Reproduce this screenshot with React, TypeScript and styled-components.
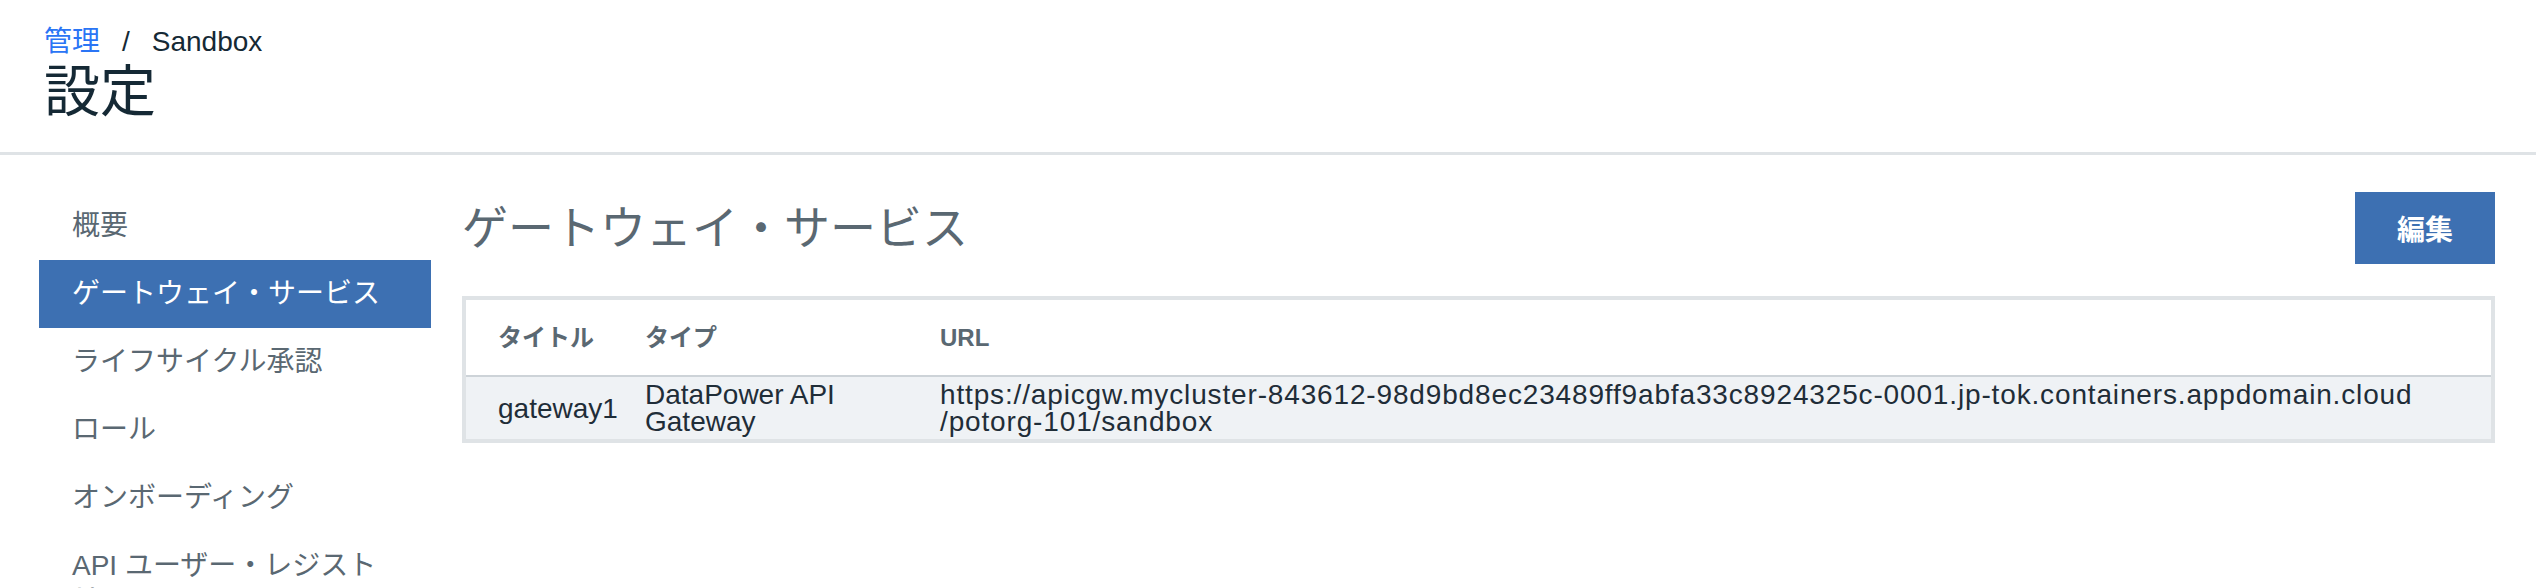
import React from "react";
import styled, { createGlobalStyle } from "styled-components";

const GlobalStyle = createGlobalStyle`
  html, body { margin: 0; padding: 0; background: #ffffff; }
  body {
    font-family: "Liberation Sans", "Noto Sans CJK JP", sans-serif;
    -webkit-font-smoothing: antialiased;
  }
  * { box-sizing: border-box; }
`;

const Page = styled.div`
  width: 100%;
  min-height: 588px;
  background: #ffffff;
`;

const Header = styled.header`
  height: 155px;
  padding: 27px 44px 0;
  border-bottom: 3px solid #dfe3e6;
`;

const Breadcrumb = styled.nav`
  display: flex;
  align-items: center;
  font-size: 28px;
  line-height: 30px;
  color: #152935;
`;

const Crumb = styled.a`
  color: #2a75f5;
  text-decoration: none;
`;

const Sep = styled.span`
  margin: 0 22px 0 22px;
`;

const Title = styled.h1`
  margin: 2px 0 0;
  font-size: 56px;
  font-weight: 400;
  line-height: 66px;
  color: #152935;
`;

const Body = styled.div`
  display: flex;
  align-items: flex-start;
  padding: 37px 41px 0 39px;
`;

const Sidebar = styled.ul`
  list-style: none;
  margin: 0;
  padding: 0;
  width: 392px;
  flex: 0 0 392px;
`;

const NavItem = styled.li<{ $active?: boolean }>`
  padding: 17px 33px;
  font-size: 28px;
  line-height: 34px;
  color: ${(p) => (p.$active ? "#ffffff" : "#5a6872")};
  background: ${(p) => (p.$active ? "#3d70b2" : "transparent")};
`;

const Main = styled.main`
  flex: 1;
  margin-left: 31px;
  min-width: 0;
`;

const TitleRow = styled.div`
  display: flex;
  align-items: center;
  justify-content: space-between;
  height: 72px;
  margin-bottom: 32px;
`;

const SectionTitle = styled.h2`
  margin: 0;
  font-size: 46px;
  font-weight: 400;
  line-height: 54px;
  color: #5a6872;
`;

const EditButton = styled.button`
  width: 140px;
  height: 72px;
  border: none;
  background: #3d70b2;
  color: #ffffff;
  font-family: "Liberation Sans", "Noto Sans CJK JP", sans-serif;
  font-size: 28px;
  font-weight: 700;
  cursor: pointer;
`;

const TableFrame = styled.div`
  border: 4px solid #dfe3e6;
`;

const Table = styled.table`
  width: 100%;
  border-collapse: collapse;
  table-layout: fixed;
`;

const Th = styled.th`
  height: 76px;
  padding: 0 16px;
  text-align: left;
  vertical-align: middle;
  font-size: 24px;
  font-weight: 700;
  line-height: 28px;
  color: #5a6872;
  background: #ffffff;
  border-bottom: 2px solid #cdd3d8;
  &:first-child { padding-left: 32px; }
`;

const Td = styled.td<{ $spaced?: boolean }>`
  height: 62px;
  padding: 4px 16px;
  vertical-align: middle;
  font-size: 28px;
  line-height: 27px;
  letter-spacing: ${(p) => (p.$spaced ? "0.85px" : "0")};
  color: #1f2d38;
  background: #eff2f5;
  &:first-child { padding-left: 32px; }
`;

const navItems = [
  "概要",
  "ゲートウェイ・サービス",
  "ライフサイクル承認",
  "ロール",
  "オンボーディング",
  "API ユーザー・レジストリ",
];

export default function App() {
  return (
    <Page>
      <GlobalStyle />
      <Header>
        <Breadcrumb>
          <Crumb href="#">管理</Crumb>
          <Sep>/</Sep>
          <span>Sandbox</span>
        </Breadcrumb>
        <Title>設定</Title>
      </Header>
      <Body>
        <Sidebar>
          {navItems.map((item, i) => (
            <NavItem key={item} $active={i === 1}>
              {item}
            </NavItem>
          ))}
        </Sidebar>
        <Main>
          <TitleRow>
            <SectionTitle>ゲートウェイ・サービス</SectionTitle>
            <EditButton>編集</EditButton>
          </TitleRow>
          <TableFrame>
            <Table>
              <colgroup>
                <col style={{ width: 163 }} />
                <col style={{ width: 295 }} />
                <col />
              </colgroup>
              <thead>
                <tr>
                  <Th>タイトル</Th>
                  <Th>タイプ</Th>
                  <Th>URL</Th>
                </tr>
              </thead>
              <tbody>
                <tr>
                  <Td>gateway1</Td>
                  <Td>
                    DataPower API
                    <br />
                    Gateway
                  </Td>
                  <Td $spaced>
                    https://apicgw.mycluster-843612-98d9bd8ec23489ff9abfa33c8924325c-0001.jp-tok.containers.appdomain.cloud
                    <br />
                    /potorg-101/sandbox
                  </Td>
                </tr>
              </tbody>
            </Table>
          </TableFrame>
        </Main>
      </Body>
    </Page>
  );
}
